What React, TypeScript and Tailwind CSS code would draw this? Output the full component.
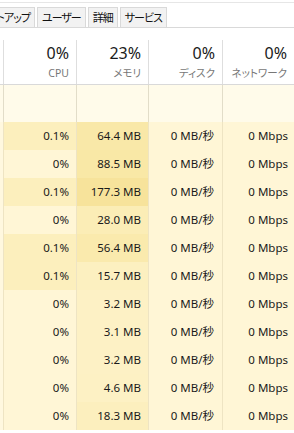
import React from "react";

type Row = { cpu: string; mem: string; cpuBg: string; memBg: string };

const rows: Row[] = [
  { cpu: "0.1%", mem: "64.4 MB", cpuBg: "bg-[#fcefbd]", memBg: "bg-[#f9e8a8]" },
  { cpu: "0%", mem: "88.5 MB", cpuBg: "bg-[#fff6d6]", memBg: "bg-[#f9e8a6]" },
  { cpu: "0.1%", mem: "177.3 MB", cpuBg: "bg-[#fcefbd]", memBg: "bg-[#f7e39b]" },
  { cpu: "0%", mem: "28.0 MB", cpuBg: "bg-[#fff6d6]", memBg: "bg-[#fbedb6]" },
  { cpu: "0.1%", mem: "56.4 MB", cpuBg: "bg-[#fcefbd]", memBg: "bg-[#faeaad]" },
  { cpu: "0.1%", mem: "15.7 MB", cpuBg: "bg-[#fcefbd]", memBg: "bg-[#fcf0c0]" },
  { cpu: "0%", mem: "3.2 MB", cpuBg: "bg-[#fff6d6]", memBg: "bg-[#fdf1c5]" },
  { cpu: "0%", mem: "3.1 MB", cpuBg: "bg-[#fff6d6]", memBg: "bg-[#fdf1c5]" },
  { cpu: "0%", mem: "3.2 MB", cpuBg: "bg-[#fff6d6]", memBg: "bg-[#fdf1c5]" },
  { cpu: "0%", mem: "4.6 MB", cpuBg: "bg-[#fff6d6]", memBg: "bg-[#fdf1c4]" },
  { cpu: "0%", mem: "18.3 MB", cpuBg: "bg-[#fff6d6]", memBg: "bg-[#fcefbe]" },
];

const headers = [
  { pct: "0%", label: "CPU" },
  { pct: "23%", label: "メモリ" },
  { pct: "0%", label: "ディスク" },
  { pct: "0%", label: "ネットワーク" },
];

function Tab({ label }: { label: string }) {
  return (
    <div className="h-[20px] shrink-0 whitespace-nowrap border border-b-0 border-[#d9d9d9] bg-[#f2f2f2] px-[4px] text-[11px] leading-[19px] tracking-[-1px] text-[#111] [font-feature-settings:'palt']">
      {label}
    </div>
  );
}

export default function App() {
  return (
    <div className="h-[433px] w-[294px] overflow-hidden bg-white font-['Noto_Sans','Noto_Sans_CJK_JP',sans-serif]">
      {/* tab strip */}
      <div className="mt-[2px] flex h-[26px] items-end gap-[2px] border-y border-t-[#e6e6e6] border-b-[#d9d9d9]">
        <div className="flex w-[35px] shrink-0 justify-end overflow-hidden">
          <Tab label="スタートアップ" />
        </div>
        <Tab label="ユーザー" />
        <Tab label="詳細" />
        <Tab label="サービス" />
      </div>

      {/* column header */}
      <div className="h-[57px] border-b border-[#d9d9d9] pt-[12px]">
        <div className="grid h-full grid-cols-[3px_73px_72px_74px_72px]">
          <div />
          {headers.map((h, i) => (
            <div key={i} className="border-l border-[#dedede] pr-[7px] text-right">
              <div className="pt-[3px] text-[16px] leading-[20px] text-[#1a1a1a]">{h.pct}</div>
              <div className="mt-[3px] text-[10.5px] leading-[14px] text-[#777] [font-feature-settings:'palt']">
                {h.label}
              </div>
            </div>
          ))}
        </div>
      </div>

      {/* group row */}
      <div className="grid h-[37px] grid-cols-[3px_73px_72px_74px_72px] bg-[#fffbea]">
        <div />
        <div className="border-l border-[#e2ddc9]" />
        <div className="border-l border-[#e2ddc9]" />
        <div className="border-l border-[#e2ddc9]" />
        <div className="border-l border-[#e2ddc9]" />
      </div>

      {/* process rows */}
      {rows.map((r, i) => (
        <div
          key={i}
          className="grid h-[28px] grid-cols-[3px_73px_72px_74px_72px] text-right text-[11.5px] leading-[28px] text-[#1a1a1a]"
        >
          <div className="bg-[#fff8df]" />
          <div className={`border-l border-[#eee4c3] pr-[7px] ${r.cpuBg}`}>{r.cpu}</div>
          <div className={`border-l border-[#eee4c3] pr-[7px] ${r.memBg}`}>{r.mem}</div>
          <div className="border-l border-[#eee4c3] bg-[#fff6d6] pr-[8px]">0 MB/秒</div>
          <div className="border-l border-[#eee4c3] bg-[#fff6d6] pr-[6px]">0 Mbps</div>
        </div>
      ))}
    </div>
  );
}
